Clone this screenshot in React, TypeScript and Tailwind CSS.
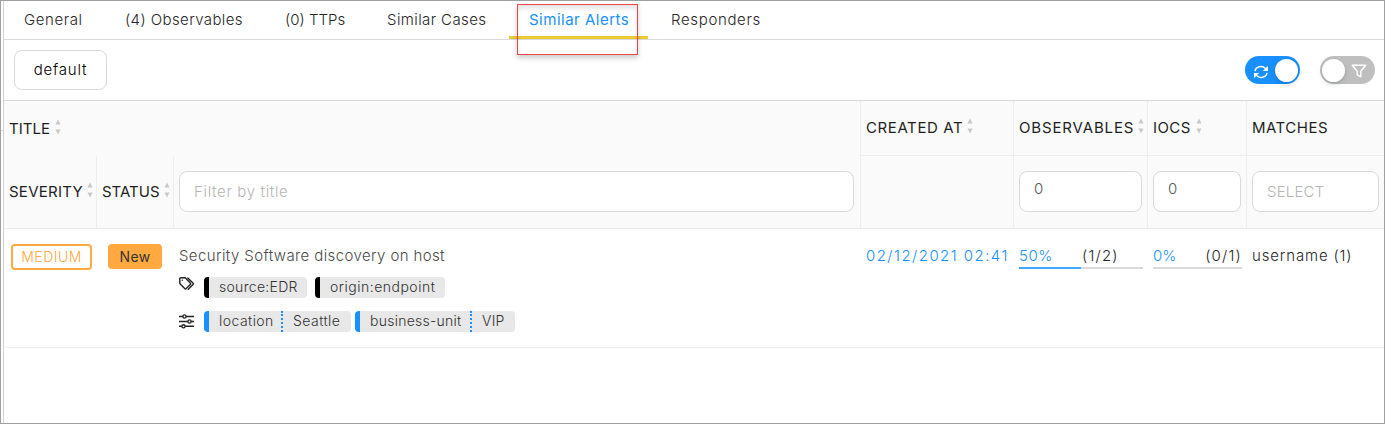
import { ReactNode } from "react";

function Sort({ className = "" }: { className?: string }) {
  return (
    <svg viewBox="0 0 6 16" className={`h-4 w-1.5 shrink-0 fill-[#c8c8c8] ${className}`}>
      <path d="M3 .5 5.500 5.500H.5z" />
      <path d="M3 15.500.5 10.500H5.500z" />
    </svg>
  );
}

function SyncIcon() {
  return (
    <svg viewBox="0 0 16 14" className="mt-[3px] h-3.5 w-4" fill="none" stroke="currentColor" strokeWidth="1.4">
      <path d="M2 6.200A6 5.400 0 0 1 12.600 3.600M14 7.800A6 5.400 0 0 1 3.400 10.400" />
      <path d="M15 .8V6H9.800zM1 13.200V8h5.200z" fill="currentColor" stroke="none" />
    </svg>
  );
}

function FilterIcon() {
  return (
    <svg viewBox="0 0 16 14" className="mt-0.5 h-3.5 w-4" fill="none" stroke="currentColor" strokeWidth="1.4" strokeLinejoin="round">
      <path d="M1.200 1.200h13.600L9.800 7.300v5.500l-3.600-2V7.300z" />
    </svg>
  );
}

function TagsIcon() {
  return (
    <svg viewBox="0 0 16 14" className="mr-[9px] h-3.5 w-4 text-[#222]" fill="none" stroke="currentColor" strokeWidth="1.400" strokeLinejoin="round" strokeLinecap="round">
      <path d="M.8 1.800a1 1 0 0 1 1-1h4.400L11.300 6a1 1 0 0 1 0 1.500L7.200 11.600a1 1 0 0 1-1.500 0L.8 6.600z" />
      <path d="M8.800.9 14 6.100a1 1 0 0 1 0 1.500l-4.700 4.700" />
      <circle cx="3.300" cy="3.300" r=".7" fill="currentColor" stroke="none" />
    </svg>
  );
}

function SlidersIcon() {
  return (
    <svg viewBox="0 0 15 15" className="mr-[10px] mt-[3px] size-[15px] text-[#222]" fill="none" stroke="currentColor" strokeWidth="1.400">
      <path d="M0 2.500h3.800M7.200 2.500H15M0 7.500h8.800M12.200 7.500H15M0 12.300h2.800M6.200 12.300H15" />
      <circle cx="5.500" cy="2.500" r="1.600" />
      <circle cx="10.500" cy="7.500" r="1.600" />
      <circle cx="4.500" cy="12.300" r="1.600" />
    </svg>
  );
}

function Tab({ children, className }: { children: ReactNode; className: string }) {
  return <button className={`flex h-[38px] shrink-0 items-center whitespace-nowrap pl-5 text-left ${className}`}>{children}</button>;
}

function Field({ children, className }: { children: ReactNode; className: string }) {
  return (
    <div className={`mt-[15px] flex h-[41px] items-center rounded-lg border border-[#d9d9d9] bg-white pl-3.5 ${className}`}>
      {children}
    </div>
  );
}

function Tag({ children, className }: { children: ReactNode; className: string }) {
  return (
    <div className={`flex h-[21px] items-stretch overflow-hidden whitespace-nowrap rounded border-l-[5px] bg-[#e8e8e8] text-[14px] leading-[20px] text-[#333] ${className}`}>
      {children}
    </div>
  );
}

export default function App() {
  return (
    <div className="flex h-[424px] w-[1385px] overflow-hidden border border-[#a0a0a0] bg-white font-['Inter',sans-serif] text-[15px] font-light text-[#262626]">
      <div className="w-0.5 shrink-0 pt-[129px]">
        <div className="h-px bg-[#d9d9d9]" />
      </div>
      <div className="flex min-w-0 flex-1 flex-col border-l border-[#d6d0d0]">
        <nav className="relative flex h-[39px] shrink-0 border-b border-[#d9d9d9]">
          <Tab className="w-[101px] tracking-[0.6px]">General</Tab>
          <Tab className="w-[160px] tracking-[0.4px]">(4) Observables</Tab>
          <Tab className="w-[102px]">(0) TTPs</Tab>
          <Tab className="w-[142px] tracking-[0.4px]">Similar Cases</Tab>
          <Tab className="mr-[3px] w-[139px] border-b-[3px] border-[#e8cb35] pt-[3px] font-normal tracking-[0.5px] text-[#1890ff]">Similar Alerts</Tab>
          <Tab className="w-[130px] tracking-[0.65px]">Responders</Tab>
          <div className="absolute left-[513px] top-[3px] h-[51px] w-[121px] border border-[#f04444] shadow-[0_3px_5px_rgba(0,0,0,0.2),inset_0_4px_4px_rgba(0,0,0,0.1)]" />
        </nav>

        <div className="flex h-[60px] shrink-0 items-start pl-2.5">
          <button className="mt-2.5 flex h-10 w-[93px] items-center justify-center rounded-lg border border-[#d9d9d9] tracking-[0.8px] text-black">default</button>
          <div className="ml-auto mt-4 flex gap-5 pr-[9px]">
            <div className="flex h-7 w-[55px] items-center justify-between rounded-full bg-[#1890ff] pl-2 pr-0.5 text-white">
              <SyncIcon />
              <div className="size-[23px] rounded-full bg-white shadow-[0_2px_4px_rgba(0,35,11,0.2)]" />
            </div>
            <div className="flex h-7 w-[55px] items-center justify-between rounded-full bg-[#bfbfbf] pl-0.5 pr-2 text-white">
              <div className="size-[23px] rounded-full bg-white shadow-[0_2px_4px_rgba(0,35,11,0.2)]" />
              <FilterIcon />
            </div>
          </div>
        </div>

        <div className="flex h-[129px] shrink-0 border-t border-b border-t-[#d9d9d9] border-b-[#ededed] bg-[#fafafa] text-[15px] font-normal text-[#1f1f1f]">
          <div className="flex w-[857px] shrink-0 flex-col border-r border-[#ededed]">
            <div className="flex h-[55px] items-center gap-[5px] pl-[5px] pt-0.5">
              <span>TITLE</span><Sort className="-mt-[5px]" />
            </div>
            <div className="flex flex-1">
              <div className="flex w-[93px] items-center justify-between border-r border-[#ededed] pl-[5px] pr-[3px]">
                <span className="tracking-[0.25px]">SEVERITY</span><Sort className="-mt-1" />
              </div>
              <div className="flex w-[77px] items-center justify-between border-r border-[#ededed] pl-[5px] pr-[3px]">
                <span>STATUS</span><Sort className="-mt-1" />
              </div>
              <div className="flex-1 pl-[5px]">
                <Field className="w-[675px] pt-px font-light tracking-[0.65px] text-[#b5b5b5]">Filter by title</Field>
              </div>
            </div>
          </div>
          <div className="w-[153px] shrink-0 border-r border-[#ededed]">
            <div className="flex h-[55px] items-center gap-1 border-b border-[#ededed] pl-[5px]"><span className="tracking-[0.6px]">CREATED AT</span><Sort className="-mt-[5px]" /></div>
          </div>
          <div className="w-[134px] shrink-0 border-r border-[#ededed]">
            <div className="flex h-[55px] items-center justify-between border-b border-[#ededed] pl-[5px] pr-[3px]"><span className="tracking-[0.85px]">OBSERVABLES</span><Sort className="-mt-[5px]" /></div>
            <Field className="ml-[5px] w-[123px] pb-[5px] font-light text-[#555]">0</Field>
          </div>
          <div className="w-[99px] shrink-0 border-r border-[#ededed]">
            <div className="flex h-[55px] items-center gap-[5px] border-b border-[#ededed] pl-[5px]"><span className="tracking-[0.4px]">IOCS</span><Sort className="-mt-[5px]" /></div>
            <Field className="ml-[5px] w-[88px] pb-[5px] font-light text-[#555]">0</Field>
          </div>
          <div className="flex-1">
            <div className="flex h-[55px] items-center border-b border-[#ededed] pl-[5px] tracking-[0.5px]">MATCHES</div>
            <Field className="ml-[5px] w-[127px] pt-px font-light tracking-[0.2px] text-[#b5b5b5]">SELECT</Field>
          </div>
        </div>

        <div className="flex h-[119px] shrink-0 border-b border-[#ededed]">
          <div className="w-[93px] shrink-0 pl-[7px] pt-[15px]">
            <div className="flex h-[26px] w-[81px] items-center justify-center rounded-sm border-2 border-[#ffa940] pb-0.5 text-[14px] tracking-[0.5px] text-[#ffa940]">MEDIUM</div>
          </div>
          <div className="w-[77px] shrink-0 pl-[11px] pt-[15px]">
            <div className="flex h-[25px] w-[54px] items-center justify-center rounded-sm bg-[#ffa940] pb-px text-[14px] font-normal tracking-[0.4px] text-[#333]">New</div>
          </div>
          <div className="flex w-[687px] shrink-0 flex-col pl-[5px] pt-[15px] text-[#4a4a4a]">
            <div className="h-[33px] leading-[24px] tracking-[0.39px]">Security Software discovery on host</div>
            <div className="flex h-[34px] items-start">
              <TagsIcon />
              <Tag className="mr-2 w-[103px] border-black pl-2.5 tracking-[0.3px]">source:EDR</Tag>
              <Tag className="w-[130px] border-black pl-2.5 tracking-[0.5px]">origin:endpoint</Tag>
            </div>
            <div className="flex items-start">
              <SlidersIcon />
              <Tag className="mr-1 w-[147px] border-[#1890ff] pl-2.5 tracking-[0.45px]">
                <span className="w-[62px]">location</span>
                <span className="border-l-2 border-dotted border-[#1890ff] pl-2.5">Seattle</span>
              </Tag>
              <Tag className="w-[160px] border-[#1890ff] pl-2.5 tracking-[0.25px]">
                <span className="w-[100px]">business-unit</span>
                <span className="border-l-2 border-dotted border-[#1890ff] pl-2.5">VIP</span>
              </Tag>
            </div>
          </div>
          <div className="w-[153px] shrink-0 pl-[5px] pt-[15px] leading-[24px] tracking-[1.45px] text-[#1890ff]">02/12/2021 02:41</div>
          <div className="w-[134px] shrink-0 pl-[5px] pt-[15px]">
            <div className="flex h-[23px] w-[124px] leading-[24px]"><span className="w-[63px] tracking-[0.6px] text-[#1890ff]">50%</span><span className="tracking-[1.2px]">(1/2)</span></div>
            <div className="h-0.5 w-[124px] bg-[#d9d9d9]"><div className="h-0.5 w-1/2 bg-[#40a9ff]" /></div>
          </div>
          <div className="w-[99px] shrink-0 pl-[5px] pt-[15px]">
            <div className="flex h-[23px] w-[89px] leading-[24px]"><span className="w-[53px] text-[#1890ff]">0%</span><span className="tracking-[1.2px]">(0/1)</span></div>
            <div className="h-0.5 w-[89px] bg-[#d9d9d9]" />
          </div>
          <div className="pl-[5px] pt-[15px] leading-[24px] tracking-[0.85px]">username (1)</div>
        </div>
      </div>
    </div>
  );
}
